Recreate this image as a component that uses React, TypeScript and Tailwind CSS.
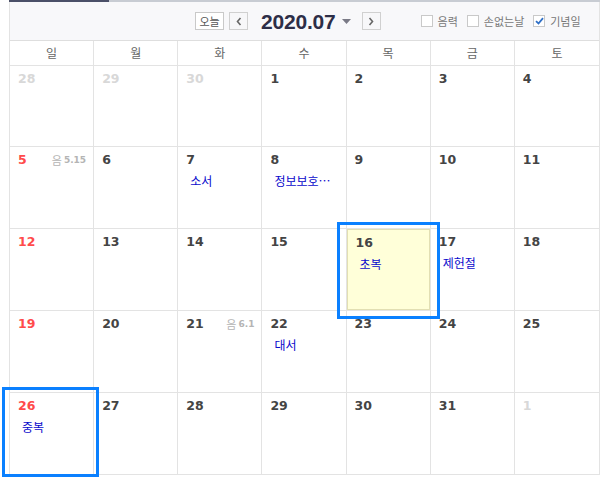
import React from 'react';

type Cell = {
  day: number;
  muted?: boolean;
  lunar?: string;
  event?: string;
  today?: boolean;
};

const weeks: Cell[][] = [
  [{ day: 28, muted: true }, { day: 29, muted: true }, { day: 30, muted: true }, { day: 1 }, { day: 2 }, { day: 3 }, { day: 4 }],
  [{ day: 5, lunar: '5.15' }, { day: 6 }, { day: 7, event: '소서' }, { day: 8, event: '정보보호…' }, { day: 9 }, { day: 10 }, { day: 11 }],
  [{ day: 12 }, { day: 13 }, { day: 14 }, { day: 15 }, { day: 16, event: '초복', today: true }, { day: 17, event: '제헌절' }, { day: 18 }],
  [{ day: 19 }, { day: 20 }, { day: 21, lunar: '6.1' }, { day: 22, event: '대서' }, { day: 23 }, { day: 24 }, { day: 25 }],
  [{ day: 26, event: '중복' }, { day: 27 }, { day: 28 }, { day: 29 }, { day: 30 }, { day: 31 }, { day: 1, muted: true }],
];

const dayNames = ['일', '월', '화', '수', '목', '금', '토'];

const kr = "font-['Noto_Sans_CJK_KR',sans-serif]";

function CheckBox({ label, checked }: { label: string; checked?: boolean }) {
  return (
    <label className="flex items-center gap-[5px]">
      <span className="w-[12px] h-[12px] border border-[#c9c9c9] bg-white flex items-center justify-center">
        {checked && (
          <svg width="9" height="8" viewBox="0 0 9 8">
            <path d="M1 4.2 L3.5 6.5 L8 1.2" fill="none" stroke="#2f6fc6" strokeWidth="1.8" />
          </svg>
        )}
      </span>
      <span className={`text-[11px] text-[#777] leading-none ${kr}`}>{label}</span>
    </label>
  );
}

export default function App() {
  return (
    <div className="relative w-[611px] h-[483px] bg-white overflow-hidden">
      {/* 상단 탭 라인 */}
      <div className="ml-[9px] w-[591px] h-[2px] flex">
        <div className="w-[100px] bg-[#4b5068]" />
        <div className="flex-1 bg-[#c8ccd3]" />
      </div>

      <div className="ml-[9px] w-[591px] border-l border-r border-[#e3e3e3]">
        {/* 헤더 */}
        <div className="h-[39px] bg-[#f8f8fa] border-b border-[#dedede] flex items-center pl-[185px]">
          <button className={`h-[18px] w-[29px] border border-[#c9c9c9] bg-white text-[11px] text-[#555] leading-none ${kr}`}>
            오늘
          </button>
          <button className="ml-[5px] h-[18px] w-[19px] border border-[#d0d0d0] bg-[#f7f7f9] flex items-center justify-center">
            <svg width="6" height="9" viewBox="0 0 6 9">
              <path d="M4.5 1 L1.5 4.5 L4.5 8" fill="none" stroke="#666" strokeWidth="1.6" />
            </svg>
          </button>
          <div className="ml-[13px] text-[21px] font-bold text-[#2d2e47] leading-none font-['Liberation_Sans',sans-serif] tracking-[-0.2px]">
            2020.07
          </div>
          <svg className="ml-[6px]" width="9" height="5" viewBox="0 0 9 5">
            <path d="M0 0 H9 L4.5 5 Z" fill="#7a7a86" />
          </svg>
          <button className="ml-[11px] h-[18px] w-[19px] border border-[#d0d0d0] bg-[#f7f7f9] flex items-center justify-center">
            <svg width="6" height="9" viewBox="0 0 6 9">
              <path d="M1.5 1 L4.5 4.5 L1.5 8" fill="none" stroke="#666" strokeWidth="1.6" />
            </svg>
          </button>
          <div className="ml-[40px] flex items-center gap-[9px]">
            <CheckBox label="음력" />
            <CheckBox label="손없는날" />
            <CheckBox label="기념일" checked />
          </div>
        </div>

        {/* 요일 */}
        <div className="grid grid-cols-7 border-b border-[#e3e3e3]">
          {dayNames.map((d, i) => (
            <div
              key={d}
              className={`h-[24px] flex items-center justify-center text-[12px] text-[#666] ${kr} ${i < 6 ? 'border-r border-[#e3e3e3]' : ''}`}
            >
              {d}
            </div>
          ))}
        </div>

        {/* 날짜 */}
        {weeks.map((week, wi) => (
          <div key={wi} className={`grid grid-cols-7 border-b border-[#e3e3e3] ${wi === 0 ? 'h-[81px]' : 'h-[82px]'}`}>
            {week.map((c, ci) => {
              const color = c.muted ? 'text-[#d8d8d8]' : ci === 0 ? 'text-[#ff4b4b]' : 'text-[#444]';
              return (
                <div key={ci} className={`relative ${ci < 6 ? 'border-r border-[#e3e3e3]' : ''}`}>
                  <div
                    className={`h-full pl-[8px] pt-[5px] ${c.today ? 'bg-[#ffffd9] border border-[#e2dfb3] pl-[7px] pt-[4px]' : ''}`}
                  >
                    <div className="flex items-center justify-between pr-[7px]">
                      <span className={`text-[12.5px] font-bold leading-[16px] font-['DejaVu_Sans',sans-serif] ${color}`}>
                        {c.day}
                      </span>
                      {c.lunar && (
                        <span className="flex items-center gap-[2px] text-[#b4b4b4] text-[9px] font-bold font-['DejaVu_Sans',sans-serif]">
                          <span className={`text-[11px] font-normal ${kr}`}>음</span>
                          {c.lunar}
                        </span>
                      )}
                    </div>
                    {c.event && (
                      <div
                        className={`mt-[5px] ml-[4px] text-[12px] leading-[16px] text-[#0a0acc] whitespace-nowrap ${kr}`}
                      >
                        {c.event}
                      </div>
                    )}
                  </div>
                </div>
              );
            })}
          </div>
        ))}
      </div>

      {/* 강조 표시 */}
      <div className="absolute left-[337px] top-[222px] w-[103px] h-[97px] border-[3px] border-[#0a80ff]" />
      <div className="absolute left-[2px] top-[387px] w-[97px] h-[90px] border-[3px] border-[#0a80ff]" />
    </div>
  );
}
